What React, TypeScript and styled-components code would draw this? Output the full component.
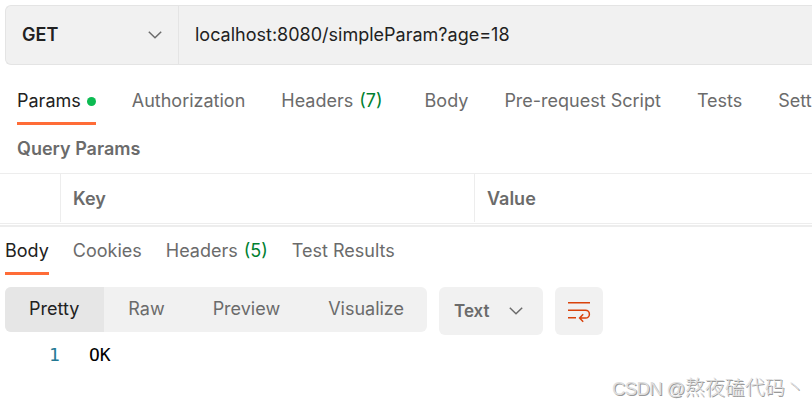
import React from "react";
import styled, { createGlobalStyle } from "styled-components";

const Global = createGlobalStyle`
  * { box-sizing: border-box; }
  html, body { margin: 0; background: #fff; overflow: hidden; }
  body { font-family: Inter, sans-serif; font-size: 18px; line-height: 24px; color: #212121; }
`;

const Page = styled.main`
  position: relative;
  display: flex;
  flex-direction: column;
  width: 812px;
  height: 408px;
  overflow: hidden;
  background: #fff;
`;

const UrlBar = styled.div`
  display: flex;
  flex: none;
  height: 60px;
  margin: 5px 0 0 5px;
  background: #f1f1f1;
  border: 1px solid #e4e4e4;
  border-right: 0;
  border-radius: 6px 0 0 6px;
`;

const Method = styled.div`
  display: flex;
  align-items: center;
  justify-content: space-between;
  width: 173px;
  padding: 0 16px 0 16px;
  border-right: 1px solid #e4e4e4;
  font-weight: 600;
`;

const Url = styled.div`
  display: flex;
  align-items: center;
  padding-left: 16px;
`;

const RequestTabs = styled.nav`
  display: flex;
  flex: none;
  gap: 36px;
  height: 60px;
  padding-left: 17px;
`;

const ResponseTabs = styled(RequestTabs)`
  gap: 24px;
  height: 48px;
  padding-left: 5px;
`;

const Tab = styled.div<{ $active?: boolean; $top: number; $after?: number }>`
  display: flex;
  flex: none;
  align-items: flex-start;
  padding-top: ${(p) => p.$top}px;
  margin-right: ${(p) => p.$after ?? 0}px;
  color: ${(p) => (p.$active ? "#212121" : "#6b6b6b")};
  border-bottom: 3px solid ${(p) => (p.$active ? "#ff6c37" : "transparent")};
  white-space: pre;
`;

const Count = styled.span`
  margin-left: 6px;
  color: #007f31;
`;

const Dot = styled.i`
  width: 9px;
  height: 9px;
  margin: 8px 0 0 6px;
  border-radius: 50%;
  background: #0cbb52;
`;

const SectionTitle = styled.div`
  flex: none;
  height: 48px;
  padding: 12px 0 0 17px;
  color: #6b6b6b;
  font-weight: 600;
`;

const TableHead = styled.div`
  display: grid;
  flex: none;
  grid-template-columns: 60px 414px 1fr;
  height: 51px;
  border-top: 1px solid #ededed;
  border-bottom: 1px solid #ededed;
`;

const HeadCell = styled.div`
  padding: 13px 0 0 12px;
  color: #6b6b6b;
  font-weight: 600;
  height: 48px;
  & + & { border-left: 1px solid #ededed; }
`;

const Divider = styled.div`
  flex: none;
  height: 2px;
  margin-top: 1px;
  background: #ededed;
`;

const Toolbar = styled.div`
  display: flex;
  flex: none;
  gap: 12px;
  height: 48px;
  margin: 12px 0 0 5px;
`;

const Segments = styled.div`
  display: flex;
  width: 422px;
  height: 45px;
  overflow: hidden;
  border-radius: 6px;
  background: #f1f1f1;
`;

const Segment = styled.div<{ $active?: boolean }>`
  padding: 10px ${(p) => (p.$active ? 25 : 24)}px 0 24px;
  background: ${(p) => (p.$active ? "#e6e6e6" : "transparent")};
  color: ${(p) => (p.$active ? "#212121" : "#6b6b6b")};
`;

const Button = styled.div<{ $width: number }>`
  display: flex;
  align-items: center;
  justify-content: space-between;
  width: ${(p) => p.$width}px;
  height: 48px;
  padding: 0 20px 0 15px;
  border-radius: 6px;
  background: #f1f1f1;
  color: #6b6b6b;
  font-size: 17px;
  font-weight: 600;
`;

const IconButton = styled(Button)`
  justify-content: center;
  padding: 0;
`;

const CodeLine = styled.div`
  display: grid;
  flex: none;
  grid-template-columns: 40px 1fr;
  margin: 8px 0 0 49px;
  font-family: "DejaVu Sans Mono", monospace;
  font-size: 18px;
  color: #000;
`;

const LineNumber = styled.span`
  color: #237893;
`;

const Watermark = styled.div`
  position: absolute;
  left: 612px;
  top: 374px;
  font-family: "Liberation Sans", "Noto Sans CJK SC", sans-serif;
  font-weight: 300;
  font-size: 20px;
  line-height: 28px;
  color: #dedede;
  text-shadow: 1px 1px 0 #9a9a9a;
  white-space: nowrap;
`;

const Latin = styled.span`
  font-size: 18.5px;
  letter-spacing: -0.6px;
`;

const Chevron = () => (
  <svg width="14" height="8" viewBox="0 0 14 8" fill="none" stroke="#6b6b6b" strokeWidth="1.5">
    <path d="M.8.8 7 6.8 13.2.8" />
  </svg>
);

const WrapIcon = () => (
  <svg width="24" height="24" viewBox="0 0 24 24" fill="none" stroke="#d9420b" strokeWidth="1.5">
    <path d="M1 3.75h22M1 11.25h17.5a3.9 3.9 0 0 1 0 7.8H13M1 18.75h8M16.2 15.3 12.6 19l3.6 3.7" />
  </svg>
);

export default function App() {
  return (
    <Page>
      <Global />
      <UrlBar>
        <Method>
          <span>GET</span>
          <Chevron />
        </Method>
        <Url>localhost:8080/simpleParam?age=18</Url>
      </UrlBar>
      <RequestTabs>
        <Tab $top={24} $active>Params<Dot /></Tab>
        <Tab $top={24}>Authorization</Tab>
        <Tab $top={24} $after={6}>Headers<Count>(7)</Count></Tab>
        <Tab $top={24}>Body</Tab>
        <Tab $top={24}>Pre-request Script</Tab>
        <Tab $top={24}>Tests</Tab>
        <Tab $top={24}>Settings</Tab>
      </RequestTabs>
      <SectionTitle>Query Params</SectionTitle>
      <TableHead>
        <HeadCell />
        <HeadCell>Key</HeadCell>
        <HeadCell>Value</HeadCell>
      </TableHead>
      <Divider />
      <ResponseTabs>
        <Tab $top={12} $active>Body</Tab>
        <Tab $top={12}>Cookies</Tab>
        <Tab $top={12}>Headers<Count>(5)</Count></Tab>
        <Tab $top={12}>Test Results</Tab>
      </ResponseTabs>
      <Toolbar>
        <Segments>
          <Segment $active>Pretty</Segment>
          <Segment>Raw</Segment>
          <Segment>Preview</Segment>
          <Segment>Visualize</Segment>
        </Segments>
        <Button $width={104}>Text<Chevron /></Button>
        <IconButton $width={48}><WrapIcon /></IconButton>
      </Toolbar>
      <CodeLine>
        <LineNumber>1</LineNumber>
        <span>OK</span>
      </CodeLine>
      <Watermark><Latin>CSDN @</Latin>熬夜磕代码丶</Watermark>
    </Page>
  );
}
